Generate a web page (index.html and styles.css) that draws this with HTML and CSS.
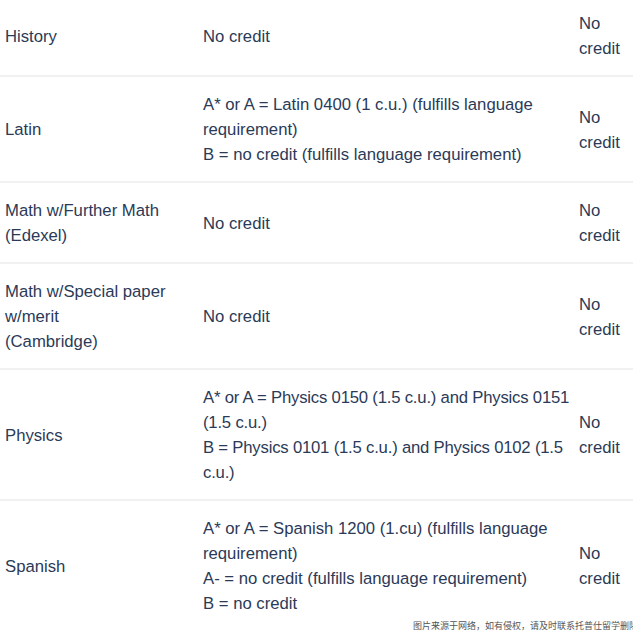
FILE: index.html
```html
<!DOCTYPE html>
<html>
<head>
<meta charset="utf-8">
<link rel="stylesheet" href="styles.css">
</head>
<body>
<div class="page">
<table class="credits">
<colgroup><col class="c1"><col class="c2"><col class="c3"></colgroup>
<tbody>
<tr><td>History</td><td>No credit</td><td>No credit</td></tr>
<tr><td>Latin</td><td>A* or A = Latin 0400 (1 c.u.) (fulfills language requirement)<br>B = no credit (fulfills language requirement)</td><td>No credit</td></tr>
<tr><td>Math w/Further Math (Edexel)</td><td>No credit</td><td>No credit</td></tr>
<tr><td>Math w/Special paper w/merit<br>(Cambridge)</td><td>No credit</td><td>No credit</td></tr>
<tr><td>Physics</td><td class="fixed">A* or A = Physics 0150 (1.5 c.u.) and Physics 0151<br>(1.5 c.u.)<br>B = Physics 0101 (1.5 c.u.) and Physics 0102 (1.5<br>c.u.)</td><td>No credit</td></tr>
<tr class="last"><td>Spanish</td><td>A* or A = Spanish 1200 (1.cu) (fulfills language requirement)<br>A- = no credit (fulfills language requirement)<br>B = no credit</td><td>No credit</td></tr>
</tbody>
</table>
<div class="watermark">图片来源于网络，如有侵权，请及时联系托普仕留学删除</div>
</div>
</body>
</html>
```
FILE: styles.css
```css
html, body {
  margin: 0;
  padding: 0;
  background: #ffffff;
  overflow: hidden;
}
.page {
  position: relative;
  width: 633px;
  height: 637px;
  overflow: hidden;
}
.credits {
  width: 633px;
  table-layout: fixed;
  border-collapse: collapse;
  margin-top: -4px;
  font-family: "Liberation Sans", Arial, sans-serif;
  font-size: 16.7px;
  line-height: 25px;
  color: #2b3a57;
}
.c1 { width: 198px; }
.c2 { width: 376px; }
.c3 { width: 59px; }
.credits td {
  padding: 15px 4px 14px 5px;
  vertical-align: middle;
  border-bottom: 2px solid #f1f1f1;
}
.credits td.fixed {
  white-space: nowrap;
  letter-spacing: -0.2px;
}
.credits tr.last td {
  border-bottom: none;
}
.watermark {
  position: absolute;
  left: 413px;
  top: 619px;
  white-space: nowrap;
  font-family: "Noto Sans CJK SC", sans-serif;
  font-size: 9px;
  line-height: 14px;
  color: #555555;
}
```
